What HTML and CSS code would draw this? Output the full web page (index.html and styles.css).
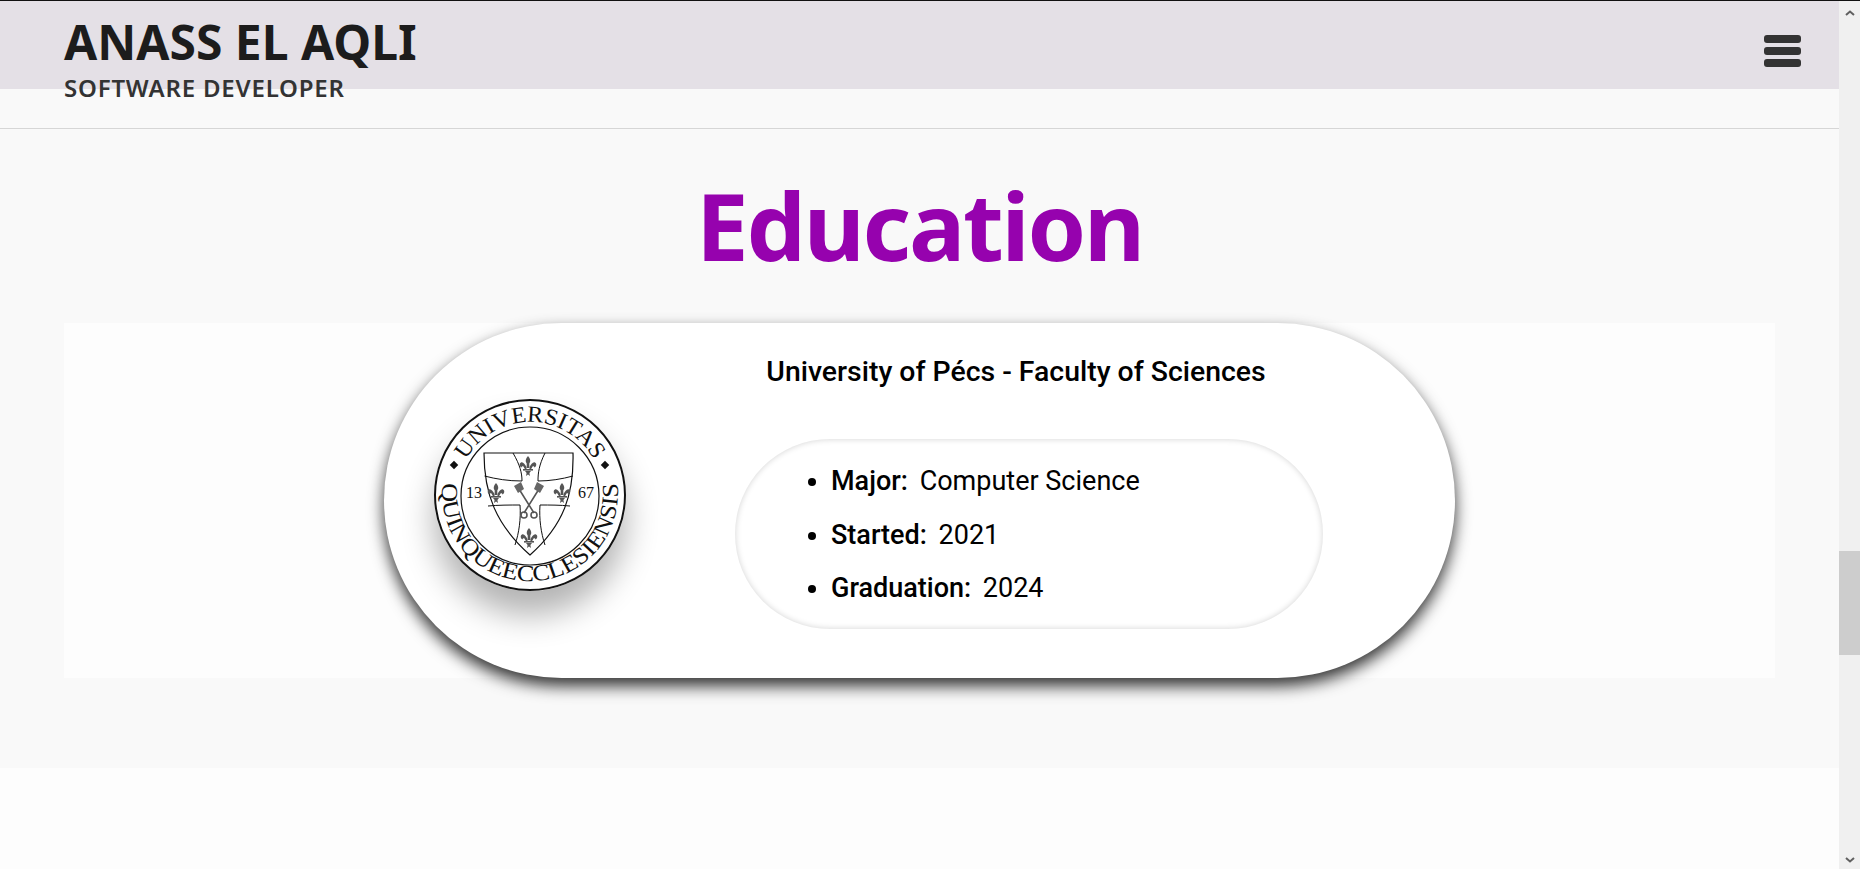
FILE: index.html
```html
<!DOCTYPE html>
<html lang="en">
<head>
<meta charset="utf-8">
<title>Anass El Aqli - Education</title>
<link rel="stylesheet" href="styles.css">
</head>
<body>
<div class="page">
  <main class="content">
    <header class="topbar">
      <div class="brand">
        <h1 class="brand-name">ANASS EL AQLI</h1>
        <p class="brand-role">SOFTWARE DEVELOPER</p>
      </div>
      <button class="menu" aria-label="Menu"><span></span><span></span><span></span></button>
    </header>
    <div class="band"></div>
    <section class="education">
      <h2 class="section-title">Education</h2>
      <div class="panel">
        <article class="pill">
          <div class="seal">
            <svg viewBox="0 0 192 192" width="192" height="192">
              <defs>
                <path id="arc-top" d="M 23 96 A 73 73 0 0 1 169 96"/>
                <path id="arc-bottom" d="M 9 81 A 88 88 0 1 0 183 81"/>
                <g id="fleur">
                  <path class="fl" d="M0 -10 C2.5 -7 3 -5 1.3 -2.5 L1.3 2 L-1.3 2 L-1.3 -2.5 C-3 -5 -2.5 -7 0 -10Z"/>
                  <path class="fl" d="M-1.5 1 C-3 -1.5 -5 -4.5 -7 -3.5 C-9 -2.5 -8.5 0.5 -6.5 1.5 C-6 -0.5 -4.5 0 -4 1.5 C-3.5 3 -2.5 3.5 -1.5 3Z"/>
                  <path class="fl" d="M1.5 1 C3 -1.5 5 -4.5 7 -3.5 C9 -2.5 8.5 0.5 6.5 1.5 C6 -0.5 4.5 0 4 1.5 C3.5 3 2.5 3.5 1.5 3Z"/>
                  <rect class="fl" x="-5" y="3" width="10" height="1.6"/>
                  <path class="fl" d="M-3 5 L3 5 L1.4 7 L2 10 L0 8.6 L-2 10 L-1.4 7Z"/>
                </g>
              </defs>
              <circle class="disc" cx="96" cy="96" r="95"/>
              <circle class="ring" cx="96" cy="97" r="69"/>
              <text class="ring-text"><textPath href="#arc-top" startOffset="50%" text-anchor="middle" textLength="156" lengthAdjust="spacingAndGlyphs">UNIVERSITAS</textPath></text>
              <text class="ring-text"><textPath href="#arc-bottom" startOffset="50%" text-anchor="middle" textLength="296" lengthAdjust="spacingAndGlyphs">QUINQUEECCLESIENSIS</textPath></text>
              <rect class="diamond" x="17" y="63" width="6" height="6" transform="rotate(45 20 66)"/>
              <rect class="diamond" x="168" y="63" width="6" height="6" transform="rotate(45 171 66)"/>
              <path class="shield" d="M50 54 L139 54 C140 95 130 126 96 156 C62 126 50 95 50 54Z"/>
              <path class="shield-line" d="M79 54 C86 66 88 74 88 82 C74 82 62 80 50.500 77"/>
              <path class="shield-line" d="M111 54 C105 66 104 74 104 82 C116 82 128 80 139 77"/>
              <path class="shield-line" d="M54 107 C64 106 76 106 86 106 C87 120 85 134 81 146"/>
              <path class="shield-line" d="M136 107 C126 106 116 106 106 106 C105 120 107 134 111 146"/>
              <use href="#fleur" x="94" y="67"/>
              <use href="#fleur" x="62" y="94"/>
              <use href="#fleur" x="128" y="94"/>
              <use href="#fleur" x="95" y="139"/>
              <path class="key" d="M85 90 L100 114 M105 90 L90 114"/>
              <path class="bit" d="M80 87 L87 83 L90 90 L84 94Z M100 90 L103 83 L110 87 L106 94Z"/>
              <circle class="key" cx="90" cy="116" r="3"/>
              <circle class="key" cx="100" cy="116" r="3"/>
              <text class="year" x="40" y="99" text-anchor="middle">13</text>
              <text class="year" x="152" y="99" text-anchor="middle">67</text>
            </svg>
          </div>
          <div class="info">
            <h3 class="school">University of Pécs - Faculty of Sciences</h3>
            <div class="details">
              <ul class="facts">
                <li><strong>Major:</strong> <span>Computer Science</span></li>
                <li><strong>Started:</strong> <span>2021</span></li>
                <li><strong>Graduation:</strong> <span>2024</span></li>
              </ul>
            </div>
          </div>
        </article>
      </div>
    </section>
  </main>
  <aside class="scrollbar" aria-hidden="true">
    <svg class="arrow" viewBox="0 0 10 6" width="10" height="6"><path d="M1 5 L5 1.5 L9 5"/></svg>
    <div class="track"><div class="thumb"></div></div>
    <svg class="arrow" viewBox="0 0 10 6" width="10" height="6"><path d="M1 1 L5 4.5 L9 1"/></svg>
  </aside>
</div>
</body>
</html>
```
FILE: styles.css
```css
* { box-sizing: border-box; }
html, body { margin: 0; height: 869px; overflow: hidden; }
body { background: #fdfdfd; font-family: Roboto, "Liberation Sans", sans-serif; color: #000; }
.page { display: flex; height: 869px; border-top: 1px solid #111; }
.content { flex: 1; min-width: 0; }

.topbar { height: 88px; background: #e4e0e6; padding: 0 38px 0 64px; display: flex; justify-content: space-between; align-items: flex-start; }
.brand { padding-top: 14px; }
.brand-name { margin: 0; font: 700 48px/54px "Noto Sans", sans-serif; color: #1c1c1c; white-space: nowrap; }
.brand-role { margin: 5px 0 0; font: 600 24px/28px "Noto Sans", sans-serif; letter-spacing: .8px; color: #333; white-space: nowrap; }
.menu { margin-top: 34px; padding: 0; width: 37px; border: 0; background: none; display: flex; flex-direction: column; gap: 4px; }
.menu span { display: block; height: 8px; border-radius: 3px; background: #333; }

.band { height: 40px; background: #f9f9f9; border-bottom: 1px solid #d6d6d6; }

.education { height: 639px; background: #f9f9f9; padding: 0 64px; display: flex; flex-direction: column; }
.section-title { margin: 36px 0 0; height: 158px; text-align: center; font: 700 94px/120px "Noto Sans", sans-serif; letter-spacing: -2.2px; color: #9602ae; }
.panel { background: #fdfdfd; height: 355px; display: flex; justify-content: center; }
.pill { width: 1071px; height: 355px; border-radius: 178px; background: #fff; box-shadow: 0 8px 16px rgba(0,0,0,.8); display: flex; }

.seal { margin: 76px 0 0 50px; width: 192px; height: 192px; border-radius: 50%; box-shadow: 0 24px 32px rgba(0,0,0,.3); flex: none; }
.seal svg { display: block; overflow: visible; }
.disc { fill: #fff; stroke: #111; stroke-width: 2; }
.ring { fill: none; stroke: #111; stroke-width: 1.2; }
.ring-text { font: 23px "Liberation Serif", serif; fill: #111; }
.diamond { fill: #111; }
.shield { fill: #fff; stroke: #111; stroke-width: 1.2; }
.shield-line { fill: none; stroke: #111; stroke-width: 1; }
.fl { fill: #555; }
.key { fill: none; stroke: #555; stroke-width: 1.6; }
.bit { fill: #666; }
.year { font: 16px "Liberation Serif", serif; fill: #111; }

.info { margin-left: 109px; width: 588px; }
.school { margin: 0; padding: 28px 26px 0 0; height: 116px; text-align: center; font: 500 28.4px/42px Roboto, sans-serif; white-space: nowrap; }
.details { width: 588px; height: 190px; border-radius: 95px; box-shadow: inset 0 0 6px rgba(0,0,0,.18); padding: 16px 0 0 96px; }
.facts { margin: 0; padding: 0; list-style: disc; font-size: 27px; line-height: 53.6px; }
.facts strong { font-weight: 500; margin-right: 5px; }

.scrollbar { width: 21px; flex: none; background: #f0f0f0; display: flex; flex-direction: column; align-items: center; padding: 9px 0 6px; }
.track { flex: 1; width: 100%; padding-top: 535px; }
.thumb { height: 104px; background: #cdcdcd; }
.arrow { flex: none; }
.arrow path { fill: none; stroke: #606060; stroke-width: 2; }
```
